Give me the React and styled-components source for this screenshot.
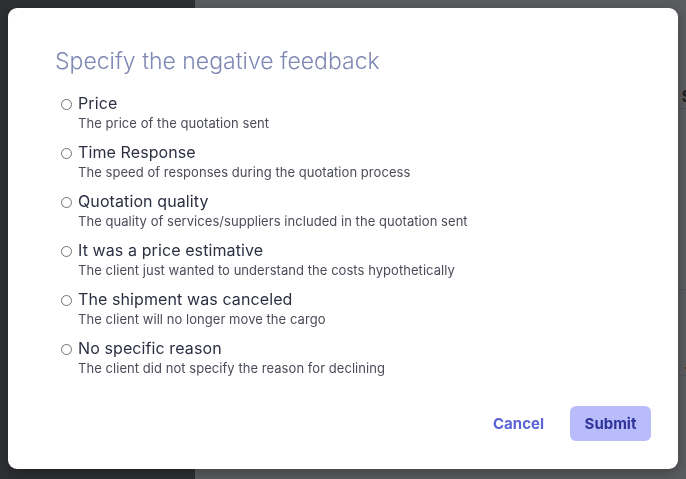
import React, { useState } from "react";
import styled, { createGlobalStyle } from "styled-components";

const GlobalStyle = createGlobalStyle`
  html, body {
    margin: 0;
    padding: 0;
    height: 100%;
  }
  body {
    font-family: "Inter", "Lato", sans-serif;
    overflow: hidden;
  }
  #root {
    height: 100%;
  }
`;

const reasons = [
  { id: "price", title: "Price", text: "The price of the quotation sent" },
  {
    id: "time",
    title: "Time Response",
    text: "The speed of responses during the quotation process",
  },
  {
    id: "quality",
    title: "Quotation quality",
    text: "The quality of services/suppliers included in the quotation sent",
  },
  {
    id: "estimative",
    title: "It was a price estimative",
    text: "The client just wanted to understand the costs hypothetically",
  },
  {
    id: "canceled",
    title: "The shipment was canceled",
    text: "The client will no longer move the cargo",
  },
  {
    id: "none",
    title: "No specific reason",
    text: "The client did not specify the reason for declining",
  },
];

const FeedbackModal = () => {
  const [selected, setSelected] = useState(null);
  return (
    <ModalStyling>
      <TitleStyling>Specify the negative feedback</TitleStyling>
      <OptionListStyling>
        {reasons.map((reason) => (
          <OptionStyling key={reason.id}>
            <RadioStyling
              type="radio"
              name="feedback"
              checked={selected === reason.id}
              onChange={() => setSelected(reason.id)}
            />
            <OptionTextStyling>
              <OptionTitleStyling>{reason.title}</OptionTitleStyling>
              <OptionDescStyling>{reason.text}</OptionDescStyling>
            </OptionTextStyling>
          </OptionStyling>
        ))}
      </OptionListStyling>
      <FooterStyling>
        <TextButtonStyling>Cancel</TextButtonStyling>
        <SubmitButtonStyling>Submit</SubmitButtonStyling>
      </FooterStyling>
    </ModalStyling>
  );
};

const App = () => (
  <>
    <GlobalStyle />
    <PageStyling>
      <SidebarStyling />
      <MainStyling>
        <PageRowStyling $height={108}>
          <PageCellStyling>$</PageCellStyling>
        </PageRowStyling>
        <PageRowStyling $height={180} $line />
        <PageRowStyling $height={85} $line>
          <PageCellStyling $small>a</PageCellStyling>
        </PageRowStyling>
        <PageRowStyling $height={25} $line />
      </MainStyling>
    </PageStyling>
    <FeedbackModal />
  </>
);

export default App;

// Styles //
const PageStyling = styled.div`
  display: flex;
  height: 100%;
`;
const SidebarStyling = styled.div`
  width: 195px;
  background: #2f3033;
`;
const MainStyling = styled.div`
  flex: 1;
  background: #5c5d61;
  display: flex;
  flex-direction: column;
`;
const PageRowStyling = styled.div`
  height: ${(p) => p.$height}px;
  border-top: ${(p) => (p.$line ? "1px solid #4c5560" : "none")};
  display: flex;
  align-items: flex-end;
  justify-content: flex-end;
`;
const PageCellStyling = styled.span`
  font-size: ${(p) => (p.$small ? "12px" : "16px")};
  font-weight: 700;
  color: #1e1f22;
  margin-right: -6px;
  padding-bottom: 2px;
`;

const ModalStyling = styled.div`
  position: fixed;
  left: 8px;
  top: 8px;
  width: 670px;
  height: 461px;
  box-sizing: border-box;
  background: #ffffff;
  border-radius: 9px;
  box-shadow: 0 4px 14px rgba(0, 0, 0, 0.3);
  padding: 38px 27px 26px 47px;
  display: flex;
  flex-direction: column;
`;
const TitleStyling = styled.h2`
  margin: 0 0 17px;
  font-size: 23px;
  font-weight: 300;
  color: #7f88b4;
  line-height: 30px;
`;
const OptionListStyling = styled.div`
  display: flex;
  flex-direction: column;
  gap: 8px;
  padding-left: 6px;
`;
const OptionStyling = styled.label`
  display: flex;
  align-items: flex-start;
  gap: 6px;
  cursor: pointer;
`;
const RadioStyling = styled.input`
  appearance: none;
  width: 11px;
  height: 11px;
  margin: 6px 0 0;
  border: 1px solid #6f7179;
  border-radius: 50%;
  background: #fff;
  flex-shrink: 0;
  &:checked {
    box-shadow: inset 0 0 0 2px #fff;
    background: #5a64d6;
  }
`;
const OptionTextStyling = styled.div`
  display: flex;
  flex-direction: column;
`;
const OptionTitleStyling = styled.span`
  font-size: 16px;
  line-height: 20px;
  letter-spacing: 0.1px;
  color: #2c2f42;
`;
const OptionDescStyling = styled.span`
  font-size: 13px;
  line-height: 21px;
  letter-spacing: 0.05px;
  color: #4a4c58;
`;
const FooterStyling = styled.div`
  margin-top: auto;
  display: flex;
  justify-content: flex-end;
  align-items: center;
  gap: 18px;
`;
const TextButtonStyling = styled.button`
  background: none;
  border: none;
  font-family: inherit;
  font-size: 15px;
  font-weight: 700;
  color: #5a64d6;
  padding: 10px 8px;
  cursor: pointer;
`;
const SubmitButtonStyling = styled.button`
  background: #b8bcfb;
  border: none;
  border-radius: 6px;
  font-family: inherit;
  font-size: 15px;
  font-weight: 700;
  color: #2f3499;
  width: 81px;
  height: 35px;
  cursor: pointer;
`;
